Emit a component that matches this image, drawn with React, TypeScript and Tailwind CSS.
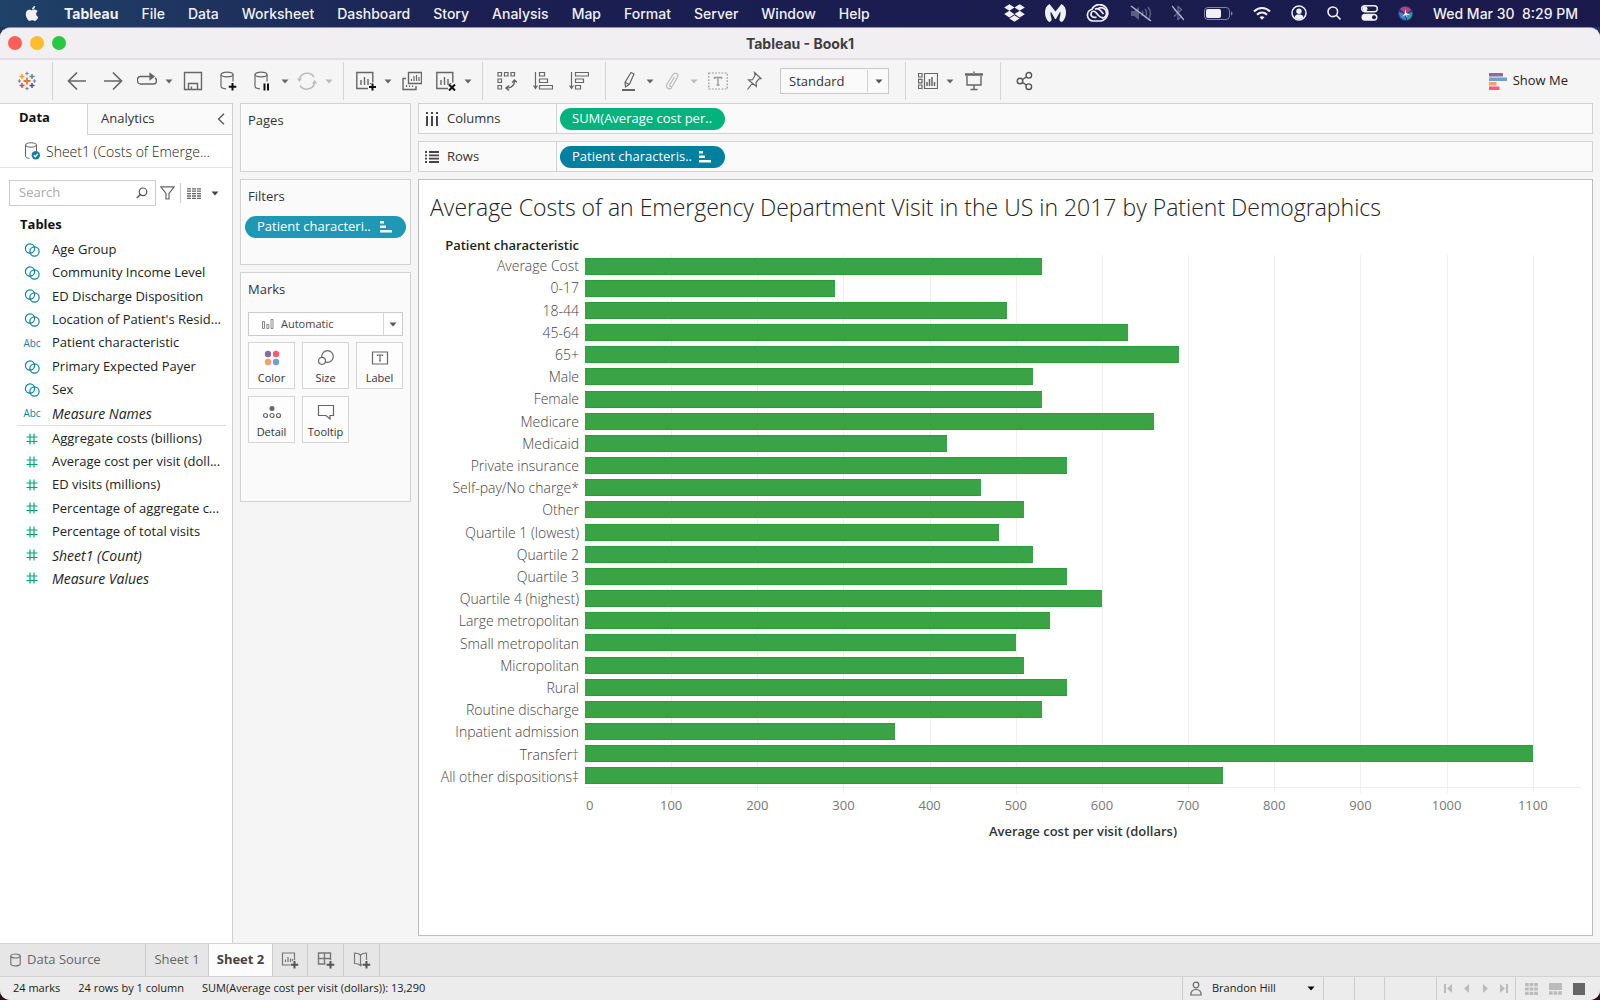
import type { ReactNode } from "react";
import { FaApple, FaDropbox } from "react-icons/fa";

const MENUS = [
  "File",
  "Data",
  "Worksheet",
  "Dashboard",
  "Story",
  "Analysis",
  "Map",
  "Format",
  "Server",
  "Window",
  "Help",
];

type FieldKind = "group" | "text" | "number";

interface Field {
  name: string;
  kind: FieldKind;
  generated?: boolean;
}

const DIMENSIONS: Field[] = [
  { name: "Age Group", kind: "group" },
  { name: "Community Income Level", kind: "group" },
  { name: "ED Discharge Disposition", kind: "group" },
  { name: "Location of Patient's Resid...", kind: "group" },
  { name: "Patient characteristic", kind: "text" },
  { name: "Primary Expected Payer", kind: "group" },
  { name: "Sex", kind: "group" },
  { name: "Measure Names", kind: "text", generated: true },
];

const MEASURES: Field[] = [
  { name: "Aggregate costs (billions)", kind: "number" },
  { name: "Average cost per visit (doll...", kind: "number" },
  { name: "ED visits (millions)", kind: "number" },
  { name: "Percentage of aggregate c...", kind: "number" },
  { name: "Percentage of total visits", kind: "number" },
  { name: "Sheet1 (Count)", kind: "number", generated: true },
  { name: "Measure Values", kind: "number", generated: true },
];

const COSTS: { label: string; value: number }[] = [
  { label: "Average Cost", value: 530 },
  { label: "0-17", value: 290 },
  { label: "18-44", value: 490 },
  { label: "45-64", value: 630 },
  { label: "65+", value: 690 },
  { label: "Male", value: 520 },
  { label: "Female", value: 530 },
  { label: "Medicare", value: 660 },
  { label: "Medicaid", value: 420 },
  { label: "Private insurance", value: 560 },
  { label: "Self-pay/No charge*", value: 460 },
  { label: "Other", value: 510 },
  { label: "Quartile 1 (lowest)", value: 480 },
  { label: "Quartile 2", value: 520 },
  { label: "Quartile 3", value: 560 },
  { label: "Quartile 4 (highest)", value: 600 },
  { label: "Large metropolitan", value: 540 },
  { label: "Small metropolitan", value: 500 },
  { label: "Micropolitan", value: 510 },
  { label: "Rural", value: 560 },
  { label: "Routine discharge", value: 530 },
  { label: "Inpatient admission", value: 360 },
  { label: "Transfer†", value: 1100 },
  { label: "All other dispositions‡", value: 740 },
];

const AXIS_MAX = 1156;
const TICKS = [0, 100, 200, 300, 400, 500, 600, 700, 800, 900, 1000, 1100];

function percent(value: number): string {
  return `${(value / AXIS_MAX) * 100}%`;
}

function Caret({ className = "text-[#666]" }: { className?: string }) {
  return (
    <svg viewBox="0 0 8 5" className={`h-[5px] w-2 ${className}`} aria-hidden>
      <path d="M0.5 0.5h7L4 4.5z" fill="currentColor" />
    </svg>
  );
}

function Glyph({ children, className = "text-[#666]" }: { children: ReactNode; className?: string }) {
  return (
    <svg
      viewBox="0 0 20 20"
      className={`h-5 w-5 shrink-0 ${className}`}
      fill="none"
      stroke="currentColor"
      strokeWidth="1.2"
      aria-hidden
    >
      {children}
    </svg>
  );
}

function Tool({ label, children }: { label: string; children: ReactNode }) {
  return (
    <button type="button" aria-label={label} className="flex h-9 w-9 items-center justify-center">
      {children}
    </button>
  );
}

function MenuTool({
  label,
  muted,
  children,
}: {
  label: string;
  muted?: boolean;
  children: ReactNode;
}) {
  return (
    <div className="flex">
      <button type="button" aria-label={label} className="flex h-9 w-8 items-center justify-center">
        {children}
      </button>
      <button
        type="button"
        aria-label={`${label} options`}
        className="flex h-9 w-3 items-center justify-center"
      >
        <Caret className={muted ? "text-[#bbb]" : "text-[#666]"} />
      </button>
    </div>
  );
}

function ToolGroup({ children }: { children: ReactNode }) {
  return (
    <div className="flex h-[38px] items-center border-r border-[#d4d4d4] pl-[6px] pr-2">
      {children}
    </div>
  );
}

function Plus() {
  return <path d="M16.500 12.500v7M13 16h7" stroke="#111" strokeWidth="2" />;
}

function Cylinder() {
  return (
    <>
      <ellipse cx="8" cy="3.500" rx="6" ry="2.300" />
      <path d="M2 3.500v11.500c0 1.500 2 2.700 5 2.800M14 3.500v7" />
    </>
  );
}

function SortMark() {
  return (
    <svg viewBox="0 0 12 12" className="h-3 w-3" fill="white" aria-hidden>
      <path d="M0 0h4v2.500H0zM0 4.500h6v2.500H0zM0 9h12v2.500H0z" />
    </svg>
  );
}

function MenuBar() {
  return (
    <header className="flex h-[27px] items-center bg-linear-to-r from-[#1f4267] via-[#1b1f52] via-30% to-[#1a1a4c] pb-px pl-6 pr-[22px] font-['Inter',sans-serif] text-[14px] font-medium text-[#f0f0f5]">
      <FaApple className="mr-6 h-[17px] w-4" aria-label="Apple" />
      <nav className="flex items-center gap-[23px]">
        <a href="#app" className="font-bold">
          Tableau
        </a>
        {MENUS.map((menu) => (
          <a key={menu} href={`#${menu.toLowerCase()}`}>
            {menu}
          </a>
        ))}
      </nav>
      <div className="ml-auto flex items-center gap-5">
        <FaDropbox className="h-5 w-[21px]" aria-label="Dropbox" />
        <svg viewBox="0 0 21 18" className="h-[18px] w-[21px]" fill="currentColor" aria-hidden>
          <path d="M4.500 0 10.500 7.500 16.500 0c3 1.500 4.500 4.500 4.500 8.500 0 4-1.500 7.500-4 9.500-2.500-.5-3-2-2.300-4.500.7-2.200 1-4 .5-6L11 15H10L5.800 7.500c-.5 2-.2 3.800.5 6C7 16 6.500 17.500 4 18 1.500 16 0 12.500 0 8.500 0 4.500 1.500 1.500 4.500 0z" />
        </svg>
        <svg viewBox="0 0 24 18" className="h-[18px] w-6" fill="none" stroke="currentColor" strokeWidth="1.700" aria-hidden>
          <path d="M7 17a6 6 0 0 1-1-11.800A8.300 8.300 0 1 1 15 17z" />
          <path d="M17.500 13.500c-2 .6-3.500-.3-5-2L9.500 8c-1.200-1.200-3.500-1-4.300.8-.9 2.300.8 4.500 3.300 4.500h2" />
          <path d="M9 5.300c2-1.200 4-.3 5.500 1.200l3 3.500M12.500 4.300c3.500-1.800 8 .5 8 4.700 0 3-2 5-4.500 5" />
        </svg>
        <svg viewBox="0 0 22 17" className="h-[17px] w-[22px]" fill="none" stroke="#5d5d85" strokeWidth="1.500" aria-hidden>
          <path d="M1 6h3l5-4v13l-5-4H1z" fill="#5d5d85" stroke="none" />
          <path d="M12 6c1 1.500 1 3.500 0 5M15 4c2 2.500 2 6.500 0 9M18 2c3 4 3 9 0 13" />
          <path d="M1 1l20 15" stroke="#b4b4c8" />
        </svg>
        <svg viewBox="0 0 12 16" className="h-4 w-3" fill="none" stroke="#6d6d92" strokeWidth="1.200" aria-hidden>
          <path d="M2 11.500 9.500 4.500 6 1.500v13l3.500-3L2 4.500" />
          <path d="M0 1l12 14" stroke="#b4b4c8" />
        </svg>
        <svg viewBox="0 0 29 13" className="h-[13px] w-[29px]" fill="none" aria-hidden>
          <rect x="0.500" y="0.500" width="25" height="12" rx="3.500" stroke="#8484a0" />
          <rect x="2" y="2" width="15" height="9" rx="2" fill="#f0f0f5" />
          <path d="M27 4.500c2 .5 2 3.500 0 4z" fill="#8484a0" />
        </svg>
        <svg viewBox="0 0 18 14" className="h-[14px] w-[18px]" fill="none" stroke="currentColor" strokeWidth="2.200" aria-hidden>
          <path d="M1 5.500c4.500-4.700 11.500-4.700 16 0M4 8.700c3-2.900 7-2.900 10 0" />
          <path d="M9 13.800 6.500 11.200c1.500-1.300 3.500-1.300 5 0z" fill="currentColor" stroke="none" />
        </svg>
        <svg viewBox="0 0 16 16" className="h-4 w-4" fill="none" stroke="currentColor" strokeWidth="1.500" aria-hidden>
          <circle cx="8" cy="8" r="7" />
          <circle cx="8" cy="6.300" r="2.700" fill="currentColor" stroke="none" />
          <path d="M3.500 12.500c.5-2.500 2-3 4.500-3s4 .5 4.500 3c-2.500 2-6.500 2-9 0z" fill="currentColor" stroke="none" />
        </svg>
        <svg viewBox="0 0 14 14" className="h-[14px] w-[14px]" fill="none" stroke="currentColor" strokeWidth="1.600" aria-hidden>
          <circle cx="5.800" cy="5.800" r="4.800" />
          <path d="m9.300 9.300 4.200 4.200" />
        </svg>
        <svg viewBox="0 0 17 16" className="h-4 w-[17px]" fill="none" stroke="currentColor" strokeWidth="1.400" aria-hidden>
          <rect x="0.700" y="0.700" width="15.600" height="6" rx="3" />
          <rect x="0.500" y="8.800" width="16" height="7" rx="3.500" fill="currentColor" stroke="none" />
          <circle cx="4" cy="3.700" r="2.500" fill="currentColor" stroke="none" />
          <circle cx="13" cy="12.300" r="2" fill="#1a1a4c" stroke="none" />
        </svg>
        <svg viewBox="0 0 15 15" className="h-[15px] w-[15px]" aria-hidden>
          <circle cx="7.500" cy="7.500" r="7.500" fill="#35376e" />
          <path d="M2 3c4-4 9-2 11 1L8 8z" fill="#b83f86" />
          <path d="M1 6c0 5 3 8 7 8l-1-6z" fill="#3b82d0" />
          <path d="M14 6c1 4-1 7-5 8l-1-6z" fill="#2c9a9a" />
          <path d="m7.500 3 .6 4 4.200 2.200-4-.5 1.500 3.200-2.500-3L4 11l2.600-3.200z" fill="#fff" />
        </svg>
        <time className="whitespace-pre">Wed Mar 30  8:29 PM</time>
      </div>
    </header>
  );
}

function TitleBar() {
  return (
    <div className="grid h-8 grid-cols-3 items-center border-b-2 border-[#e0dee0] bg-[#f2eff2] px-2">
      <div className="flex gap-2">
        <button type="button" aria-label="Close" className="h-[14px] w-[14px] rounded-full bg-[#ff5f57]" />
        <button type="button" aria-label="Minimize" className="h-[14px] w-[14px] rounded-full bg-[#febc2e]" />
        <button type="button" aria-label="Zoom" className="h-[14px] w-[14px] rounded-full bg-[#28c840]" />
      </div>
      <h1 className="text-center font-['Inter',sans-serif] text-[14px] font-bold text-[#3f3d3f]">
        Tableau - Book1
      </h1>
    </div>
  );
}

function Toolbar() {
  return (
    <div className="flex h-[43px] items-center bg-[#f5f5f5] pb-px">
      <div className="flex h-[38px] items-center border-r border-[#d4d4d4] pl-[17px] pr-[15px]">
        <button type="button" aria-label="Start page">
          <Glyph>
            <path d="M10 6.500v7M6.500 10h7" stroke="#e8762d" strokeWidth="1.800" />
            <path d="M5 3v5M2.500 5.500h5" stroke="#f0a030" strokeWidth="1.500" />
            <path d="M15 3v5M12.500 5.500h5" stroke="#5b879b" strokeWidth="1.500" />
            <path d="M5 12v5M2.500 14.500h5" stroke="#d6455a" strokeWidth="1.500" />
            <path d="M15 12v5M12.500 14.500h5" stroke="#3f5587" strokeWidth="1.500" />
            <path d="M10 .8v3.400M8.300 2.500h3.400M10 15.800v3.400M8.300 17.500h3.400" stroke="#6b8fa8" />
            <path d="M2.500 8.300v3.400M.8 10h3.400M17.500 8.300v3.400M15.800 10h3.400" stroke="#7a80b0" />
          </Glyph>
        </button>
      </div>
      <ToolGroup>
        <Tool label="Undo">
          <Glyph>
            <path d="M19 10H1.500M10 1.500 1.500 10l8.500 8.500" strokeWidth="1.700" />
          </Glyph>
        </Tool>
        <Tool label="Redo">
          <Glyph>
            <path d="M1 10h17.500M10 1.500l8.500 8.500-8.500 8.500" strokeWidth="1.700" />
          </Glyph>
        </Tool>
        <MenuTool label="Replay">
          <Glyph>
            <path d="M16 5.500H3.500a3 3 0 0 0-3 3v1.500a3 3 0 0 0 3 3h13a3 3 0 0 0 3-3c0-1.500-.5-2.500-1.500-3" strokeWidth="1.400" />
            <path d="m13 2.500 4 3-4 3z" fill="currentColor" />
          </Glyph>
        </MenuTool>
        <Tool label="Save">
          <Glyph>
            <path d="M1.500 1.500h17v17h-17zM5.500 18.500v-6h9v6M8.500 18.500v-3" strokeWidth="1.400" />
          </Glyph>
        </Tool>
        <Tool label="New data source">
          <Glyph>
            <Cylinder />
            <path d="M13.500 12v7.500M9.800 15.800h7.500" stroke="#111" strokeWidth="2" />
          </Glyph>
        </Tool>
        <MenuTool label="Pause auto updates">
          <Glyph>
            <Cylinder />
            <path d="M11.500 12.500v7M15 12.500v7" stroke="#111" strokeWidth="2" />
          </Glyph>
        </MenuTool>
        <MenuTool label="Run update" muted>
          <Glyph className="text-[#bbb]">
            <path d="M2.500 8a8 8 0 0 1 14.500-2M17.500 12A8 8 0 0 1 3 14.500" strokeWidth="1.500" />
            <path d="M0 7.500h5L2.300 11zM20 12.500h-5L17.700 9z" fill="currentColor" stroke="none" />
          </Glyph>
        </MenuTool>
      </ToolGroup>
      <ToolGroup>
        <MenuTool label="New worksheet">
          <Glyph>
            <path d="M12 17.500H.8V1.500h16v10M5 14V9M8.500 14V6M12 14V8M14.500 13v-1" strokeWidth="1.400" />
            <Plus />
          </Glyph>
        </MenuTool>
        <Tool label="Duplicate">
          <Glyph>
            <path d="M6.500 1.500h13v11h-13zM4 7.500H1v11h13V15" strokeWidth="1.400" />
            <path d="M9.500 10V8M12 10V5M14.500 10V4M17 10V6M4.500 16v-2M7.500 16v-1.500M10.500 16v-1.500" />
          </Glyph>
        </Tool>
        <MenuTool label="Clear sheet">
          <Glyph>
            <path d="M12 17.500H.8V1.500h16v10M5 14V9M8.500 14V6M12 14V8M14.500 13v-1" strokeWidth="1.400" />
            <path d="m13 13.500 6 6M19 13.500l-6 6" stroke="#111" strokeWidth="2" />
          </Glyph>
        </MenuTool>
      </ToolGroup>
      <ToolGroup>
        <Tool label="Swap rows and columns">
          <Glyph>
            <path d="M1 1.500h3.500V5H1zM7.500 1.500H11V5H7.500zM14 1.500h3.500V5H14zM1 8h3.500v3.500H1zM1 14.500h3.500V18H1z" />
            <path d="M17.500 9.500c0 5-3 7.500-8 7.500M15 11.500l2.500-2.500 2.500 2.500M12 14.500 9 17l3 2.500" strokeWidth="1.400" />
          </Glyph>
        </Tool>
        <Tool label="Sort ascending">
          <Glyph>
            <path d="M2.500 1v16M.5 14.500l2 3 2-3M6.500 1.500h5V5h-5zM6.500 8h8v3.500h-8zM6.500 14.500h13V18h-13z" />
          </Glyph>
        </Tool>
        <Tool label="Sort descending">
          <Glyph>
            <path d="M2.500 1v16M.5 14.500l2 3 2-3M6.500 1.500h13V5h-13zM6.500 8h8v3.500h-8zM6.500 14.500h5V18h-5z" />
          </Glyph>
        </Tool>
      </ToolGroup>
      <ToolGroup>
        <MenuTool label="Highlight">
          <Glyph>
            <path d="M13 1.500 16 3l-4.500 10-4 3-.5-4.500zM7.300 11.500l4 2" />
            <path d="M4 19h13" strokeWidth="1.800" />
          </Glyph>
        </MenuTool>
        <MenuTool label="Group members" muted>
          <Glyph className="text-[#bbb]">
            <path d="m12.500 6-4.500 7.500c-1 2 1.500 3 2.500 1.500L15.500 6c1.500-3-2.500-5.500-4.500-2.500L5 13c-2 4 3 6.500 5 3.500" />
          </Glyph>
        </MenuTool>
        <Tool label="Show mark labels">
          <Glyph className="text-[#999]">
            <rect x="0.800" y="2" width="18.400" height="16" strokeDasharray="1.800 1.400" />
            <path d="M6.500 8V6.500h7V8M10 6.500v7.500M8.500 14h3" strokeWidth="1.400" />
          </Glyph>
        </Tool>
        <Tool label="Fix axes">
          <Glyph>
            <path d="m10.500 1.500 6.500 6-2 .3-3 3.700.3 4L4.500 9l4-.3L11 4.500zM8.300 12.300 3.500 18.500" />
          </Glyph>
        </Tool>
        <div className="relative ml-2 mr-2">
          <select
            aria-label="Fit"
            className="h-[26px] w-[109px] appearance-none border border-[#c8c8c8] bg-[#fafafa] pl-2 text-[13px] text-[#333]"
          >
            <option>Standard</option>
          </select>
          <span className="pointer-events-none absolute inset-y-[2px] right-0 flex w-[22px] items-center justify-center border-l border-[#d0d0d0]">
            <Caret className="text-[#555]" />
          </span>
        </div>
      </ToolGroup>
      <ToolGroup>
        <MenuTool label="Show cards">
          <Glyph>
            <path d="M.5 2.500H4V6H.5zM.5 8.300H4v3.500H.5zM.5 14H4v3.500H.5zM6.500 2.500h13v15h-13z" />
            <path d="M9 15v-4M11.500 15V8M14 15V6M16.500 15v-4" strokeWidth="1.500" />
          </Glyph>
        </MenuTool>
        <Tool label="Presentation mode">
          <Glyph>
            <path d="M1 3.500h18" strokeWidth="2.500" />
            <path d="M10 .5V2M3 5v9h14V5M10 14v4.500M6.500 18.500h7" strokeWidth="1.400" />
          </Glyph>
        </Tool>
      </ToolGroup>
      <div className="pl-[6px]">
        <Tool label="Share workbook">
          <Glyph className="text-[#555]">
            <circle cx="5" cy="10" r="2.800" strokeWidth="1.400" />
            <circle cx="13.800" cy="4.300" r="2.800" strokeWidth="1.400" />
            <circle cx="13.800" cy="15.700" r="2.800" strokeWidth="1.400" />
            <path d="m7.500 8.500 4-2.600M7.500 11.500l4 2.600" strokeWidth="1.400" />
          </Glyph>
        </Tool>
      </div>
      <button type="button" className="ml-auto mr-8 flex items-center gap-[6px] text-[13px] text-[#222]">
        <svg viewBox="0 0 18 17" className="h-[17px] w-[18px]" aria-hidden>
          <path d="M0 0h14v3.500H0z" fill="#8a6d99" />
          <path d="M0 4.500h18V8H0z" fill="#6fa0d0" />
          <path d="M0 9h7.500v3.500H0z" fill="#ff9f66" />
          <path d="M0 13.500h10.500V17H0z" fill="#fb5a74" />
        </svg>
        Show Me
      </button>
    </div>
  );
}

function FieldIcon({ kind }: { kind: FieldKind }) {
  if (kind === "text") {
    return <span className="w-[18px] text-center text-[10px] text-[#0f80a3]">Abc</span>;
  }
  if (kind === "number") {
    return (
      <svg viewBox="0 0 18 14" className="h-[14px] w-[18px]" fill="none" stroke="#00a877" strokeWidth="1.200" aria-hidden>
        <path d="M7 1.500v11M11 1.500v11M3.500 5h11M3.500 9.500h11" />
      </svg>
    );
  }
  return (
    <svg viewBox="0 0 18 14" className="h-[14px] w-[18px]" fill="none" stroke="#0f80a3" strokeWidth="1.200" aria-hidden>
      <circle cx="7" cy="5.500" r="4.600" />
      <circle cx="11.500" cy="8.500" r="4.600" />
    </svg>
  );
}

function FieldItem({ field }: { field: Field }) {
  return (
    <li className="flex items-center gap-[11px] whitespace-nowrap pl-[23px]">
      <FieldIcon kind={field.kind} />
      <span className={field.generated ? "text-[14px] italic" : ""}>{field.name}</span>
    </li>
  );
}

function DataPane() {
  return (
    <aside className="w-[233px] shrink-0 border-r border-[#d0d0d0] bg-white text-[13px] text-[#222]">
      <div className="flex h-8">
        <button type="button" className="w-[87px] border-t border-[#d4d4d4] pb-[3px] pr-[18px] font-bold text-[#111]">
          Data
        </button>
        <div className="flex flex-1 items-center border-b border-l border-t border-[#d0d0d0] bg-[#fafafa] pl-[13px] pr-[7px]">
          <button type="button" className="text-[#333]">
            Analytics
          </button>
          <button type="button" aria-label="Collapse pane" className="ml-auto">
            <svg viewBox="0 0 8 12" className="h-3 w-2" fill="none" stroke="#555" strokeWidth="1.300" aria-hidden>
              <path d="M7 .8 1.500 6 7 11.200" />
            </svg>
          </button>
        </div>
      </div>
      <div className="flex h-[33px] items-center gap-[5px] border-b border-[#e4e4e4] pl-6 text-[14px] font-light text-[#222]">
        <svg viewBox="0 0 17 18" className="h-[18px] w-[17px]" fill="none" stroke="#666" aria-hidden>
          <ellipse cx="7" cy="3" rx="5.500" ry="2.200" />
          <path d="M1.500 3v11c0 1.200 1.500 2.200 4 2.300M12.500 3v6" />
          <circle cx="11.800" cy="13.200" r="4.200" fill="#0f80a3" stroke="none" />
          <path d="m9.800 13.200 1.500 1.500 2.500-2.800" stroke="#fff" strokeWidth="1.300" />
        </svg>
        Sheet1 (Costs of Emerge...
      </div>
      <div className="flex items-center pl-[9px] pt-3">
        <label className="flex h-[26px] w-[147px] items-center border border-[#ccc] pl-[9px] pr-[7px]">
          <input
            type="search"
            aria-label="Search fields"
            placeholder="Search"
            className="w-full min-w-0 outline-none placeholder:text-[#aaa]"
          />
          <svg viewBox="0 0 12 12" className="h-3 w-3 shrink-0" fill="none" stroke="#555" strokeWidth="1.200" aria-hidden>
            <circle cx="7" cy="4.800" r="3.800" />
            <path d="M4.300 7.500.8 11" strokeWidth="1.500" />
          </svg>
        </label>
        <button type="button" aria-label="Filter fields" className="ml-1">
          <svg viewBox="0 0 15 14" className="h-[14px] w-[15px]" fill="none" stroke="#666" strokeWidth="1.200" aria-hidden>
            <path d="M.8.8h13.400L9 7.500v5.500H6V7.500z" />
          </svg>
        </button>
        <span className="ml-[5px] h-5 border-l border-[#ccc]" />
        <button type="button" aria-label="View fields" className="ml-[6px] flex items-center gap-[10px]">
          <svg viewBox="0 0 14 11" className="h-[11px] w-[14px]" stroke="#666" strokeWidth="1.300" strokeDasharray="4 1" aria-hidden>
            <path d="M0 .8h14M0 3.200h14M0 5.600h14M0 8h14M0 10.300h14" />
          </svg>
          <Caret className="text-[#444]" />
        </button>
      </div>
      <h2 className="pb-1 pl-5 pt-2 text-[13px] font-bold leading-5 text-[#111]">Tables</h2>
      <ul className="grid h-[187px] auto-rows-fr">
        {DIMENSIONS.map((field) => (
          <FieldItem key={field.name} field={field} />
        ))}
      </ul>
      <hr className="mb-px ml-[17px] mr-[6px] border-[#dcdcdc]" />
      <ul className="grid h-[163px] auto-rows-fr">
        {MEASURES.map((field) => (
          <FieldItem key={field.name} field={field} />
        ))}
      </ul>
    </aside>
  );
}

function MarkButton({ label, children }: { label: string; children: ReactNode }) {
  return (
    <button
      type="button"
      className="flex h-[47px] flex-col items-center justify-between border border-[#d4d4d4] bg-[#fdfdfd] pb-[2px] pt-[5px] text-[11px] leading-4 text-[#333]"
    >
      {children}
      {label}
    </button>
  );
}

function Cards() {
  return (
    <div className="flex w-[171px] shrink-0 flex-col gap-[7px] text-[13px] text-[#333]">
      <section className="h-[69px] border border-[#d2d2d2] bg-[#fafafa] px-[7px] py-[6px]">
        <h2 className="leading-5">Pages</h2>
      </section>
      <section className="h-[86px] border border-[#d2d2d2] bg-[#fafafa] px-1 py-[6px]">
        <h2 className="px-[3px] leading-5">Filters</h2>
        <button
          type="button"
          className="mt-[10px] flex h-[22px] w-full items-center justify-between rounded-full bg-[#1f98b6] pl-3 pr-[14px] text-white"
        >
          Patient characteri..
          <SortMark />
        </button>
      </section>
      <section className="h-[230px] border border-[#d2d2d2] bg-[#fafafa] px-[7px] py-[6px]">
        <h2 className="leading-5">Marks</h2>
        <div className="relative mt-[13px]">
          <select
            aria-label="Mark type"
            className="h-6 w-full appearance-none border border-[#ccc] bg-white pl-8 text-[11px] text-[#444]"
          >
            <option>Automatic</option>
          </select>
          <svg
            viewBox="0 0 12 10"
            className="pointer-events-none absolute left-[14px] top-[7px] h-[10px] w-3"
            fill="none"
            stroke="#888"
            aria-hidden
          >
            <path d="M.5 2.500h2v7h-2zM4.800 5.500h2v4h-2zM9 .5h2v9H9z" />
          </svg>
          <span className="pointer-events-none absolute inset-y-px right-px flex w-[19px] items-center justify-center border-l border-[#d6d6d6]">
            <Caret className="text-[#555]" />
          </span>
        </div>
        <div className="mt-[6px] grid grid-cols-3 gap-[7px]">
          <MarkButton label="Color">
            <svg viewBox="0 0 16 16" className="mt-[2px] h-4 w-4" aria-hidden>
              <circle cx="4" cy="4" r="3.200" fill="#8a6d99" />
              <circle cx="12" cy="4" r="3.200" fill="#fb5a74" />
              <circle cx="4" cy="12" r="3.200" fill="#ff9f66" />
              <circle cx="12" cy="12" r="3.200" fill="#6fa0d0" />
            </svg>
          </MarkButton>
          <MarkButton label="Size">
            <Glyph>
              <circle cx="11.500" cy="8.500" r="5.800" />
              <circle cx="6" cy="12.800" r="3.500" fill="#fdfdfd" />
            </Glyph>
          </MarkButton>
          <MarkButton label="Label">
            <Glyph>
              <path d="M2.500 4h15v12h-15z" />
              <path d="M7.500 8V7h5v1M10 7v6M9 13h2" />
            </Glyph>
          </MarkButton>
          <MarkButton label="Detail">
            <Glyph>
              <circle cx="10" cy="6.500" r="2.500" fill="currentColor" stroke="none" />
              <circle cx="3.500" cy="13.500" r="2" />
              <circle cx="10" cy="13.500" r="2" />
              <circle cx="16.500" cy="13.500" r="2" />
            </Glyph>
          </MarkButton>
          <MarkButton label="Tooltip">
            <Glyph>
              <path d="M2.500 3.500h15v10h-3.500v3.500L10 13.500H2.500z" />
            </Glyph>
          </MarkButton>
        </div>
      </section>
    </div>
  );
}

function Shelf({ label, icon, children }: { label: string; icon: ReactNode; children: ReactNode }) {
  return (
    <div className="flex h-[31px] border border-[#d2d2d2] bg-[#fafafa]">
      <div className="flex w-[138px] items-center gap-2 border-r border-[#d2d2d2] pl-[6px] text-[#333]">
        {icon}
        {label}
      </div>
      <div className="flex items-center pl-[3px]">{children}</div>
    </div>
  );
}

function Chart() {
  return (
    <section className="flex-1 border border-[#bdbdbd] bg-white px-[11px] pb-20 pt-[11px]">
      <h2 className="text-[23px] font-light leading-8 text-[#222]">
        Average Costs of an Emergency Department Visit in the US in 2017 by Patient Demographics
      </h2>
      <div className="mt-3 flex gap-[6px]">
        <div className="w-[149px] shrink-0 text-right">
          <div className="h-5 whitespace-nowrap text-[13px] font-semibold leading-5 text-[#222]">
            Patient characteristic
          </div>
          <ul className="grid h-[533px] auto-rows-fr items-center text-[14px] font-light leading-5 text-[#444]">
            {COSTS.map((row) => (
              <li key={row.label} className="whitespace-nowrap">
                {row.label}
              </li>
            ))}
          </ul>
        </div>
        <div className="flex-1 pt-5">
          <div className="relative">
            {TICKS.slice(1).map((tick) => (
              <span
                key={tick}
                className="absolute -bottom-[5px] top-0 border-l border-[#efefef]"
                style={{ left: percent(tick) }}
              />
            ))}
            <div className="relative grid h-[533px] auto-rows-fr items-center border-b border-[#eee]">
              {COSTS.map((row) => (
                <div
                  key={row.label}
                  className="h-[17px] border-y border-[#2a9e37] bg-[#3aa346]"
                  style={{ width: percent(row.value) }}
                />
              ))}
            </div>
          </div>
          <div className="relative mt-[7px] h-5 text-[13px] leading-5 text-[#777]">
            {TICKS.map((tick) => (
              <span
                key={tick}
                className={tick === 0 ? "absolute left-px" : "absolute -translate-x-1/2"}
                style={tick === 0 ? undefined : { left: percent(tick) }}
              >
                {tick}
              </span>
            ))}
          </div>
          <div className="mt-[6px] text-center text-[13px] font-semibold leading-5 text-[#333]">
            Average cost per visit (dollars)
          </div>
        </div>
      </div>
    </section>
  );
}

function SheetTabs() {
  return (
    <nav className="flex h-[34px] border-y border-[#d2d2d2] bg-[#e6e6e6] text-[13px] text-[#666]">
      <a href="#data-source" className="flex w-[146px] items-center gap-[6px] border-r border-[#ccc] pl-[10px]">
        <svg viewBox="0 0 11 14" className="h-[14px] w-[11px]" fill="none" stroke="#777" strokeWidth="1.200" aria-hidden>
          <ellipse cx="5.500" cy="3" rx="4.700" ry="2" />
          <path d="M.8 3v8c0 2.500 9.400 2.500 9.400 0V3" />
        </svg>
        Data Source
      </a>
      <a href="#sheet-1" className="flex w-[63px] items-center justify-center border-r border-[#ccc]">
        Sheet 1
      </a>
      <a href="#sheet-2" className="flex w-[64px] items-center justify-center border-r border-[#ccc] bg-[#fcfcfc] font-bold text-[#444]">
        Sheet 2
      </a>
      <button type="button" aria-label="New worksheet" className="flex w-[35px] items-center justify-center border-r border-[#ccc]">
        <svg viewBox="0 0 18 18" className="h-[18px] w-[18px]" fill="none" stroke="#777" strokeWidth="1.200" aria-hidden>
          <path d="M9 14H1.500V2h12v7M4.500 11V8.500M7 11V6M9.500 11V7.500M11.500 10V8" />
          <path d="M13.500 10v7.500M9.700 13.700h7.500" stroke="#555" strokeWidth="2" />
        </svg>
      </button>
      <button type="button" aria-label="New dashboard" className="flex w-[36px] items-center justify-center border-r border-[#ccc]">
        <svg viewBox="0 0 18 18" className="h-[18px] w-[18px]" fill="none" stroke="#777" strokeWidth="1.400" aria-hidden>
          <path d="M8.500 13H1.500V2h12v7M7.500 2v11M1.500 7.500h12" />
          <path d="M13.500 10v7.500M9.700 13.700h7.500" stroke="#555" strokeWidth="2" />
        </svg>
      </button>
      <button type="button" aria-label="New story" className="flex w-[36px] items-center justify-center border-r border-[#ccc]">
        <svg viewBox="0 0 18 18" className="h-[18px] w-[18px]" fill="none" stroke="#777" strokeWidth="1.200" aria-hidden>
          <path d="M7.500 4C6 2.500 4 2 1.500 2v10.500c2.500 0 4.500.5 6 2zM7.500 4C9 2.500 11 2 13.500 2v7M7.500 14.500 9 13.300" />
          <path d="M13.500 10v7.500M9.700 13.700h7.500" stroke="#555" strokeWidth="2" />
        </svg>
      </button>
    </nav>
  );
}

function StatusBar() {
  return (
    <footer className="flex h-[23px] items-center bg-[#ececec] pl-[13px] text-[11px] text-[#222]">
      <div className="flex gap-[18px]">
        <span>24 marks</span>
        <span>24 rows by 1 column</span>
        <span>SUM(Average cost per visit (dollars)): 13,290</span>
      </div>
      <div className="ml-auto flex h-full items-stretch">
        <div className="relative flex w-[141px] items-center border-l border-[#ccc]">
          <svg viewBox="0 0 12 15" className="pointer-events-none absolute left-[7px] h-[15px] w-3" fill="none" stroke="#666" strokeWidth="1.200" aria-hidden>
            <circle cx="6" cy="4" r="2.800" />
            <path d="M.8 14c0-5 2.500-5.500 5.200-5.500s5.200.5 5.200 5.500z" />
          </svg>
          <select aria-label="Signed-in user" className="h-full w-full appearance-none pl-[29px]">
            <option>Brandon Hill</option>
          </select>
          <Caret className="pointer-events-none absolute right-2 text-black" />
        </div>
        <span className="w-[31px] border-l border-[#ccc]" />
        <span className="w-[30px] border-l border-[#ccc]" />
        <span className="w-[52px] border-l border-[#ccc]" />
        <div className="flex w-[79px] items-center justify-between border-l border-[#ccc] px-[7px] text-[#bbb]">
          <button type="button" aria-label="First sheet">
            <svg viewBox="0 0 9 9" className="h-[9px] w-[9px]" fill="currentColor" aria-hidden>
              <path d="M0 0h2v9H0zM8 0v9L3 4.500z" />
            </svg>
          </button>
          <button type="button" aria-label="Previous sheet">
            <svg viewBox="0 0 9 9" className="h-[9px] w-[9px]" fill="currentColor" aria-hidden>
              <path d="M7 0v9L2 4.500z" />
            </svg>
          </button>
          <button type="button" aria-label="Next sheet">
            <svg viewBox="0 0 9 9" className="h-[9px] w-[9px]" fill="currentColor" aria-hidden>
              <path d="M2 0v9l5-4.500z" />
            </svg>
          </button>
          <button type="button" aria-label="Last sheet">
            <svg viewBox="0 0 9 9" className="h-[9px] w-[9px]" fill="currentColor" aria-hidden>
              <path d="M7 0h2v9H7zM1 0v9l5-4.500z" />
            </svg>
          </button>
        </div>
        <div className="flex w-[85px] items-center gap-[11px] border-l border-[#ccc] pl-[9px]">
          <button type="button" aria-label="Show sheet sorter">
            <svg viewBox="0 0 13 12" className="h-3 w-[13px]" stroke="#bbb" strokeWidth="3.200" strokeDasharray="3.700 .9" aria-hidden>
              <path d="M0 1.600h13M0 6h13M0 10.400h13" />
            </svg>
          </button>
          <button type="button" aria-label="Show filmstrip">
            <svg viewBox="0 0 13 12" className="h-3 w-[13px]" aria-hidden>
              <path d="M0 0h13v7H0z" fill="#bbb" />
              <path d="M0 10h13" stroke="#bbb" strokeWidth="3.500" strokeDasharray="3.700 .9" />
            </svg>
          </button>
          <button type="button" aria-label="Show tabs" className="h-3 w-3 bg-[#666]" />
        </div>
      </div>
    </footer>
  );
}

export default function App() {
  return (
    <div className="flex min-h-screen flex-col bg-linear-to-b from-[#1c3560] to-[#300d1b] font-['Open_Sans',sans-serif]">
      <MenuBar />
      <div className="flex flex-1 flex-col overflow-hidden rounded-[10px] border-t border-[#8f8fb0] bg-[#f5f5f5]">
        <TitleBar />
        <Toolbar />
        <main className="flex flex-1">
          <DataPane />
          <div className="flex flex-1 gap-[7px] px-[7px] pb-[7px]">
            <Cards />
            <div className="flex flex-1 flex-col gap-[7px]">
              <div className="flex flex-col gap-[7px] text-[13px]">
                <Shelf
                  label="Columns"
                  icon={
                    <svg viewBox="0 0 14 14" className="h-[14px] w-[14px]" stroke="#444" strokeWidth="2" aria-hidden>
                      <path d="M2 0v2M7 0v2M12 0v2M2 4v10M7 4v10M12 4v10" />
                    </svg>
                  }
                >
                  <button type="button" className="flex h-[22px] w-[165px] items-center rounded-full bg-[#00b37c] pl-3 text-white">
                    SUM(Average cost per..
                  </button>
                </Shelf>
                <Shelf
                  label="Rows"
                  icon={
                    <svg viewBox="0 0 14 12" className="h-3 w-[14px]" stroke="#444" strokeWidth="1.800" aria-hidden>
                      <path d="M0 1h2M0 4.300h2M0 7.600h2M0 11h2M4 1h10M4 4.300h10M4 7.600h10M4 11h10" />
                    </svg>
                  }
                >
                  <button
                    type="button"
                    className="flex h-[22px] w-[165px] items-center justify-between rounded-full bg-[#00809f] pl-3 pr-[14px] text-white"
                  >
                    Patient characteris..
                    <SortMark />
                  </button>
                </Shelf>
              </div>
              <Chart />
            </div>
          </div>
        </main>
        <SheetTabs />
        <StatusBar />
      </div>
    </div>
  );
}
